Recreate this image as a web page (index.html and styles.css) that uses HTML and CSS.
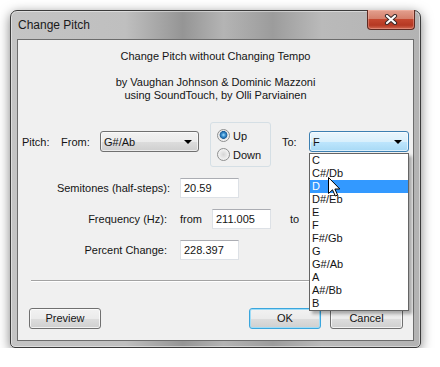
FILE: index.html
```html
<!DOCTYPE html>
<html lang="en">
<head>
    <meta charset="UTF-8">
    <title>Change Pitch</title>
    <link rel="stylesheet" href="styles.css">
</head>
<body>
    <div class="window">
        <div class="titlebar">
            <span class="title">Change Pitch</span>
            <div class="close">
                <svg width="14" height="11" viewBox="0 0 14 11">
                    <path d="M3 2 L11 9 M11 2 L3 9" stroke="#3a2a2a" stroke-width="4.2" stroke-linecap="round"/>
                    <path d="M3 2 L11 9 M11 2 L3 9" stroke="#fff" stroke-width="2.2" stroke-linecap="round"/>
                </svg>
            </div>
        </div>
        <div class="client">
            <div class="intro">
                <p>Change Pitch without Changing Tempo</p>
                <p class="credits">by Vaughan Johnson &amp; Dominic Mazzoni<br>using SoundTouch, by Olli Parviainen</p>
            </div>

            <div class="pitch-row">
                <span class="lbl-pitch">Pitch:</span>
                <span class="lbl-from">From:</span>
                <div class="combo from">G#/Ab <span class="arrow"></span></div>
                <div class="updown">
                    <div class="opt"><span class="radio on"></span>Up</div>
                    <div class="opt"><span class="radio"></span>Down</div>
                </div>
                <span class="lbl-to">To:</span>
                <div class="combo to hot">F <span class="arrow"></span></div>
            </div>

            <div class="fields">
                <div class="key">Semitones (half-steps):</div>
                <div><div class="box">20.59</div></div>
                <div class="key short">Frequency (Hz):</div>
                <div class="freq">
                    <span class="from-lbl">from</span>
                    <div class="box">211.005</div>
                    <span class="to-lbl">to</span>
                </div>
                <div class="key short">Percent Change:</div>
                <div><div class="box">228.397</div></div>
            </div>

            <div class="slider"></div>

            <div class="buttons">
                <div class="btn">Preview</div>
                <div class="btn default">OK</div>
                <div class="btn cancel">Cancel</div>
            </div>

            <ul class="droplist">
                <li>C</li>
                <li>C#/Db</li>
                <li class="sel">D</li>
                <li>D#/Eb</li>
                <li>E</li>
                <li>F</li>
                <li>F#/Gb</li>
                <li>G</li>
                <li>G#/Ab</li>
                <li>A</li>
                <li>A#/Bb</li>
                <li>B</li>
            </ul>

            <svg class="cursor" width="14" height="21" viewBox="0 0 14 21">
                <path d="M0.5 0.5 L0.5 16.5 L4.5 12.8 L7.3 19 L9.6 18 L6.9 12 L11.8 12 Z" fill="#fff" stroke="#000" stroke-width="1" stroke-linejoin="miter"/>
            </svg>
        </div>
    </div>
</body>
</html>
```

FILE: styles.css
```css
body {
    margin: 0;
    background: #fff;
    font-family: "Liberation Sans", Arial, sans-serif;
    font-size: 11px;
    color: #141414;
}
.window {
    position: relative;
    box-sizing: border-box;
    width: 411px;
    height: 338px;
    margin: 10px 0 0 10px;
    padding: 0 6px 6px;
    display: flex;
    flex-direction: column;
    border: 1px solid #3b3b3b;
    border-radius: 7px 7px 5px 5px;
    background: linear-gradient(to right, #c4c4c4, #bfbfbf 28%, #959595 42%, #b4b4b4 52%, #9c9c9c 64%, #bababa 76%, #b3b3b3);
    box-shadow: inset 0 0 0 1px rgba(255, 255, 255, 0.45), 0 3px 12px rgba(0, 0, 0, 0.5);
}
.titlebar {
    height: 28px;
    display: flex;
    align-items: center;
}
.title {
    padding-left: 1px;
    font-size: 12px;
    color: #1a1a1a;
}
.close {
    position: absolute;
    top: -1px;
    right: 5px;
    box-sizing: border-box;
    width: 48px;
    height: 20px;
    display: flex;
    align-items: center;
    justify-content: center;
    border: 1px solid #5e2a22;
    border-top: none;
    border-radius: 0 0 4px 4px;
    background: linear-gradient(#e3a08f, #d5806c 45%, #c4472f 50%, #b53923 80%, #d06a53);
    box-shadow: inset 0 0 0 1px rgba(255, 200, 190, 0.35);
}
.client {
    position: relative;
    flex: 1;
    background: #f0f0f0;
    border: 1px solid #6c6c6c;
}
.intro {
    padding-top: 10px;
    text-align: center;
    line-height: 13px;
}
.intro p {
    margin: 0;
}
.intro .credits {
    margin-top: 13px;
}
.pitch-row {
    display: flex;
    align-items: center;
    height: 39px;
    margin-top: 20px;
    padding-left: 4px;
}
.lbl-pitch, .lbl-from {
    width: 39px;
}
.lbl-to {
    width: 27px;
    margin-left: 11px;
}
.combo {
    box-sizing: border-box;
    height: 21px;
    display: flex;
    align-items: center;
    justify-content: space-between;
    padding: 0 6px 0 3px;
    border: 1px solid #707070;
    border-radius: 3px;
    background: linear-gradient(#f2f2f2, #ebebeb 50%, #dddddd 51%, #cfcfcf);
    box-shadow: inset 0 0 0 1px rgba(255, 255, 255, 0.6);
}
.combo.from {
    width: 99px;
}
.combo.to {
    width: 100px;
}
.combo.hot {
    border-color: #3c7fb1;
    background: linear-gradient(#eaf6fd, #d9f0fc 50%, #bee6fd 51%, #a7d9f5);
}
.arrow {
    width: 0;
    height: 0;
    border-left: 4px solid transparent;
    border-right: 4px solid transparent;
    border-top: 4px solid #000;
}
.updown {
    align-self: flex-start;
    box-sizing: border-box;
    width: 61px;
    height: 45px;
    margin-left: 11px;
    padding: 3px 0 0 6px;
    border: 1px solid #d5dfe5;
    border-radius: 3px;
}
.opt {
    display: flex;
    align-items: center;
    gap: 3px;
    height: 19px;
}
.radio {
    box-sizing: border-box;
    width: 13px;
    height: 13px;
    border: 1px solid #8e8f8f;
    border-radius: 50%;
    background: radial-gradient(circle at 50% 50%, #d6d6d6 0, #e6e6e6 3px, #f6f6f6 6px);
}
.radio.on {
    background: radial-gradient(circle at 50% 45%, #a8e0fb 0, #3e93d3 1.8px, #1b5f9a 3.6px, #e4e4e4 4.2px, #f7f7f7 6px);
}
.fields {
    display: grid;
    grid-template-columns: 152px auto;
    align-items: center;
    column-gap: 10px;
    row-gap: 11px;
    margin-top: 17px;
}
.key {
    text-align: right;
}
.key.short {
    padding-right: 3px;
}
.box {
    box-sizing: border-box;
    width: 59px;
    height: 20px;
    padding: 0 3px;
    line-height: 18px;
    background: #fff;
    border: 1px solid #dde1e6;
    border-top-color: #abadb3;
}
.freq {
    display: flex;
    align-items: center;
}
.from-lbl {
    width: 32px;
}
.to-lbl {
    margin-left: 19px;
}
.slider {
    margin: 20px 10px 0 13px;
    border-top: 1px solid #a3a3a3;
    border-bottom: 1px solid #fff;
}
.buttons {
    display: flex;
    margin-top: 26px;
    padding: 0 10px 0 11px;
}
.btn {
    box-sizing: border-box;
    width: 72px;
    height: 21px;
    line-height: 19px;
    text-align: center;
    border: 1px solid #707070;
    border-radius: 3px;
    background: linear-gradient(#f2f2f2, #ebebeb 50%, #dddddd 51%, #cfcfcf);
    box-shadow: inset 0 0 0 1px rgba(255, 255, 255, 0.7);
}
.btn.default {
    margin-left: auto;
    border-color: #3aa6dd;
    box-shadow: inset 0 0 0 1px #9fdcf7;
}
.btn.cancel {
    width: 73px;
    margin-left: 9px;
}
.droplist {
    position: absolute;
    left: 291px;
    top: 113px;
    box-sizing: border-box;
    width: 100px;
    margin: 0;
    padding: 0;
    list-style: none;
    background: #fff;
    border: 1px solid #646464;
    box-shadow: 3px 3px 3px rgba(0, 0, 0, 0.3);
}
.droplist li {
    height: 13px;
    line-height: 13px;
    padding-left: 2px;
}
.droplist li.sel {
    background: #3399ff;
    color: #fff;
}
.cursor {
    position: absolute;
    left: 310px;
    top: 137px;
}
```
